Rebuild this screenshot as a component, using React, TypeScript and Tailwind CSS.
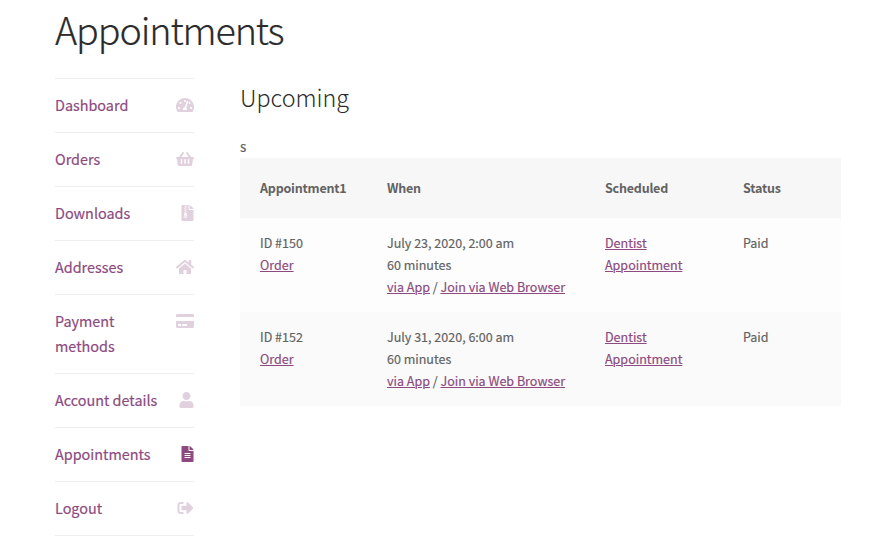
import type { ReactNode } from "react";
import type { IconType } from "react-icons";
import {
  FaTachometerAlt,
  FaShoppingBasket,
  FaFileArchive,
  FaHome,
  FaCreditCard,
  FaUser,
  FaFileAlt,
  FaSignOutAlt,
} from "react-icons/fa";

type NavItem = { label: string; icon: IconType; width: string; active?: boolean };

const navItems: NavItem[] = [
  { label: "Dashboard", icon: FaTachometerAlt, width: "w-[18px]" },
  { label: "Orders", icon: FaShoppingBasket, width: "w-[18px]" },
  { label: "Downloads", icon: FaFileArchive, width: "w-[13px]" },
  { label: "Addresses", icon: FaHome, width: "w-[18px]" },
  { label: "Payment methods", icon: FaCreditCard, width: "w-[18px]" },
  { label: "Account details", icon: FaUser, width: "w-[15px]" },
  { label: "Appointments", icon: FaFileAlt, width: "w-[13px]", active: true },
  { label: "Logout", icon: FaSignOutAlt, width: "w-[17px]" },
];

const appointments = [
  { id: 150, date: "July 23, 2020, 2:00 am" },
  { id: 152, date: "July 31, 2020, 6:00 am" },
];

function Link({ children }: { children: ReactNode }) {
  return (
    <a href="#" className="text-[#8c4a80] underline decoration-1 underline-offset-1">
      {children}
    </a>
  );
}

function Sidebar() {
  return (
    <nav className="w-[139px] shrink-0 border-t border-[#eeeeee]">
      <ul>
        {navItems.map(({ label, icon: Icon, width, active }) => (
          <li key={label} className="border-b border-[#eeeeee]">
            <a
              href="#"
              className="flex items-start justify-between pt-[13px] pb-[15px] text-[14.4px] leading-[25px] text-[#8c4a80]"
            >
              <span className="max-w-[110px] [-webkit-text-stroke:0.18px]">{label}</span>
              <Icon className={`mt-[5px] h-4 shrink-0 ${width} ${active ? "" : "opacity-25"}`} />
            </a>
          </li>
        ))}
      </ul>
    </nav>
  );
}

export default function App() {
  return (
    <div className="h-[550px] overflow-hidden bg-white pl-[55px] font-['Noto_Sans_CJK_JP',sans-serif] text-[#626262]">
      <h1 className="h-[78px] pt-1 text-[37.7px] leading-[50px] font-light tracking-[-1.12px] text-[#2b2b2b] [-webkit-text-stroke:0.2px]">
        Appointments
      </h1>
      <div className="flex gap-[46px]">
        <Sidebar />
        <main className="w-[601px]">
          <h2 className="h-[58px] pt-[3px] text-[23.3px] leading-8 font-light text-[#2b2b2b]">Upcoming</h2>
          <p className="h-[22px] text-[13.5px] leading-[20px] [-webkit-text-stroke:0.18px]">s</p>
          <table className="w-full table-fixed text-left text-[12.53px] leading-[22px]">
            <colgroup>
              <col className="w-[127px]" />
              <col className="w-[218px]" />
              <col className="w-[138px]" />
              <col />
            </colgroup>
            <thead>
              <tr className="h-[60px] bg-[#f7f7f7]">
                {["Appointment1", "When", "Scheduled", "Status"].map((title) => (
                  <th key={title} className="pl-5 font-bold tracking-[-0.22px]">
                    {title}
                  </th>
                ))}
              </tr>
            </thead>
            <tbody className="[-webkit-text-stroke:0.18px]">
              {appointments.map(({ id, date }) => (
                <tr key={id} className="h-[94px] bg-[#fdfdfd] align-top even:bg-[#fafafa]">
                  <td className="pt-3.5 pl-5">
                    ID #{id}
                    <br />
                    <Link>Order</Link>
                  </td>
                  <td className="pt-3.5 pl-5">
                    {date}
                    <br />
                    60 minutes
                    <br />
                    <Link>via App</Link> / <Link>Join via Web Browser</Link>
                  </td>
                  <td className="pt-3.5 pl-5">
                    <Link>
                      Dentist
                      <br />
                      Appointment
                    </Link>
                  </td>
                  <td className="pt-3.5 pl-5">Paid</td>
                </tr>
              ))}
            </tbody>
          </table>
        </main>
      </div>
    </div>
  );
}
